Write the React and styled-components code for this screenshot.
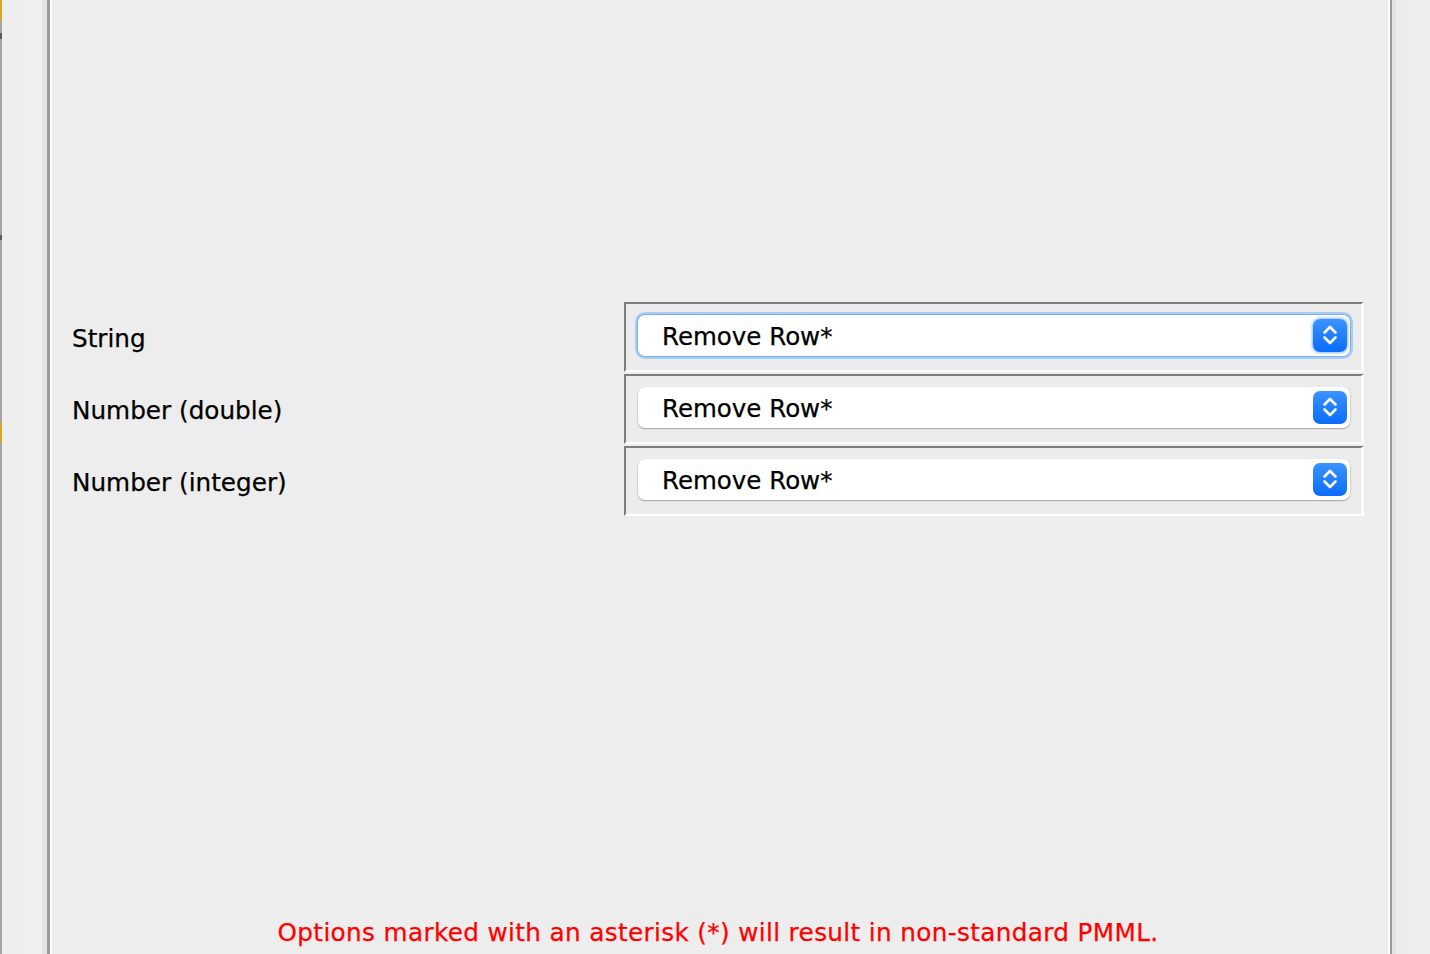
import React from "react";
import styled, { createGlobalStyle } from "styled-components";

const GlobalStyle = createGlobalStyle`
  html, body {
    margin: 0;
    padding: 0;
    background: #ededed;
  }
  body {
    font-family: "DejaVu Sans", "Liberation Sans", sans-serif;
    color: #000;
    -webkit-text-stroke: 0.25px currentColor;
  }
`;

const Page = styled.div`
  display: flex;
  width: 1430px;
  height: 954px;
  overflow: hidden;
`;

// thin vertical bands of the window frames on both sides
const Stripe = styled.div`
  flex: 0 0 ${p => p.w}px;
  background: ${p => p.c};
`;

const Rail = styled.div`
  flex: 0 0 2px;
  display: flex;
  flex-direction: column;
  background: #a3a3a3;
`;

const RailMark = styled.div`
  flex: 0 0 ${p => p.h}px;
  margin-top: ${p => p.top || 0}px;
  background: ${p => p.c};
`;

const Panel = styled.div`
  flex: 1;
  display: flex;
  flex-direction: column;
  background: #ededed;
  padding: 0 24px 0 20px;
`;

const Form = styled.div`
  display: grid;
  grid-template-columns: 552px 740px;
  row-gap: 2px;
  margin-top: 302px;
`;

const Label = styled.div`
  display: flex;
  align-items: center;
  font-size: 24.7px;
  padding-top: 2px;
`;

const Group = styled.div`
  box-sizing: border-box;
  height: 70px;
  border-style: solid;
  border-width: 2px 3px 2px 2px;
  border-color: #7d7d7d #ffffff #ffffff #7d7d7d;
  padding: 9px 11px 14px 12px;
  background: #ececec;
`;

const Combo = styled.div`
  box-sizing: border-box;
  height: 41px;
  margin-top: 2px;
  display: flex;
  align-items: center;
  background: #fff;
  border-radius: 7px;
  box-shadow: ${p =>
    p.focused
      ? "0 0 0 1px #7fb0ee, 0 0 0 3px #a9cbf4"
      : "0 0.5px 0 0.5px rgba(0,0,0,0.12), 0 1px 2px rgba(0,0,0,0.2)"};
`;

const ComboText = styled.span`
  flex: 1;
  padding: 2px 0 0 24px;
  font-size: 24.5px;
  line-height: 39px;
`;

const Stepper = styled.div`
  width: 34px;
  height: 33px;
  margin-right: 3px;
  margin-top: -1px;
  border-radius: 7px;
  background: linear-gradient(#3b93ff, #0a6cfd);
  display: flex;
  align-items: center;
  justify-content: center;
  box-shadow: ${p => (p.focused ? "0 0 3px 1px #8dbcf3" : "none")};
`;

const Footer = styled.div`
  margin-top: auto;
  padding-bottom: 6px;
  text-align: center;
  color: #ff0000;
  font-size: 24.7px;
  letter-spacing: 0.36px;
  line-height: 30px;
`;

const Chevrons = () => (
  <svg width="18" height="24" viewBox="0 0 18 24" fill="none">
    <path d="M3.5 9.5 L9 4 L14.5 9.5" stroke="#fff" strokeWidth="2.6" strokeLinecap="round" strokeLinejoin="round" />
    <path d="M3.5 14.5 L9 20 L14.5 14.5" stroke="#fff" strokeWidth="2.6" strokeLinecap="round" strokeLinejoin="round" />
  </svg>
);

const rows = [
  { label: "String", value: "Remove Row*", focused: true },
  { label: "Number (double)", value: "Remove Row*" },
  { label: "Number (integer)", value: "Remove Row*" },
];

const App = () => (
  <>
    <GlobalStyle />
    <Page>
      <Rail>
        <RailMark h={21} c="#d4a928" />
        <RailMark top={12} h={6} c="#5c5c5c" />
        <RailMark top={196} h={5} c="#5c5c5c" />
        <RailMark top={183} h={20} c="#d4a928" />
      </Rail>
      <Stripe w={24} c="#eeeeee" />
      <Stripe w={16} c="#efefef" />
      <Stripe w={5} c="#e3e3e3" />
      <Stripe w={3} c="#9b9b9b" />
      <Stripe w={2} c="#ffffff" />
      <Panel>
        <Form>
          {rows.map(row => (
            <React.Fragment key={row.label}>
              <Label>{row.label}</Label>
              <Group>
                <Combo focused={row.focused}>
                  <ComboText>{row.value}</ComboText>
                  <Stepper focused={row.focused}>
                    <Chevrons />
                  </Stepper>
                </Combo>
              </Group>
            </React.Fragment>
          ))}
        </Form>
        <Footer>Options marked with an asterisk (*) will result in non-standard PMML.</Footer>
      </Panel>
      <Stripe w={2} c="#ffffff" />
      <Stripe w={2} c="#9b9b9b" />
      <Stripe w={4} c="#e3e3e3" />
      <Stripe w={14} c="#ececec" />
      <Stripe w={20} c="#eeeeee" />
    </Page>
  </>
);

export default App;
